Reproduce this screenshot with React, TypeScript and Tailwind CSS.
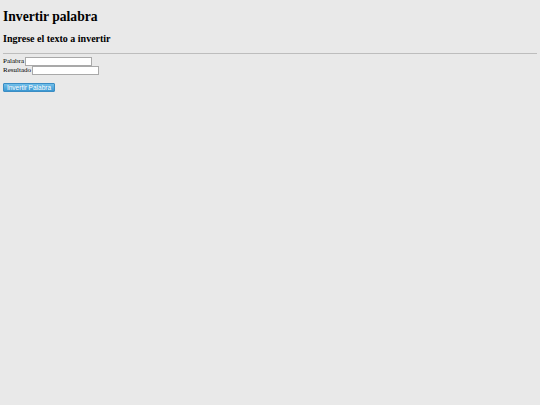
export default function App() {
  return (
    <div className="min-h-[405px] bg-[#e9e9e9] px-[3px] pt-[9px] text-black" style={{ fontFamily: '"Liberation Serif", serif' }}>
      <h1 className="text-[13.6px] font-bold leading-[16px]">Invertir palabra</h1>
      <h2 className="mt-[8px] text-[10px] font-bold leading-[12px]">Ingrese el texto a invertir</h2>
      <hr className="mt-[8px] border-t border-[#bdbdbd]" />
      <div className="mt-[3px] flex flex-col text-[7px] leading-[9px] text-black">
        <div className="flex h-[9px] items-center gap-[1px]">
          <span>Palabra</span>
          <input className="h-[9px] w-[67px] border border-[#a9a9a9] bg-white" />
        </div>
        <div className="flex h-[9px] items-center gap-[1px]">
          <span>Resultado</span>
          <input className="h-[9px] w-[67px] border border-[#a9a9a9] bg-white" />
        </div>
      </div>
      <button
        className="mt-[8px] block h-[9px] w-[52px] rounded-[1px] border border-[#3b8dc4] bg-gradient-to-b from-[#72bfe9] to-[#3a98d2] text-[6.5px] leading-[7px] text-white"
        style={{ fontFamily: '"Liberation Sans", Arial, sans-serif' }}
      >
        Invertir Palabra
      </button>
    </div>
  );
}
